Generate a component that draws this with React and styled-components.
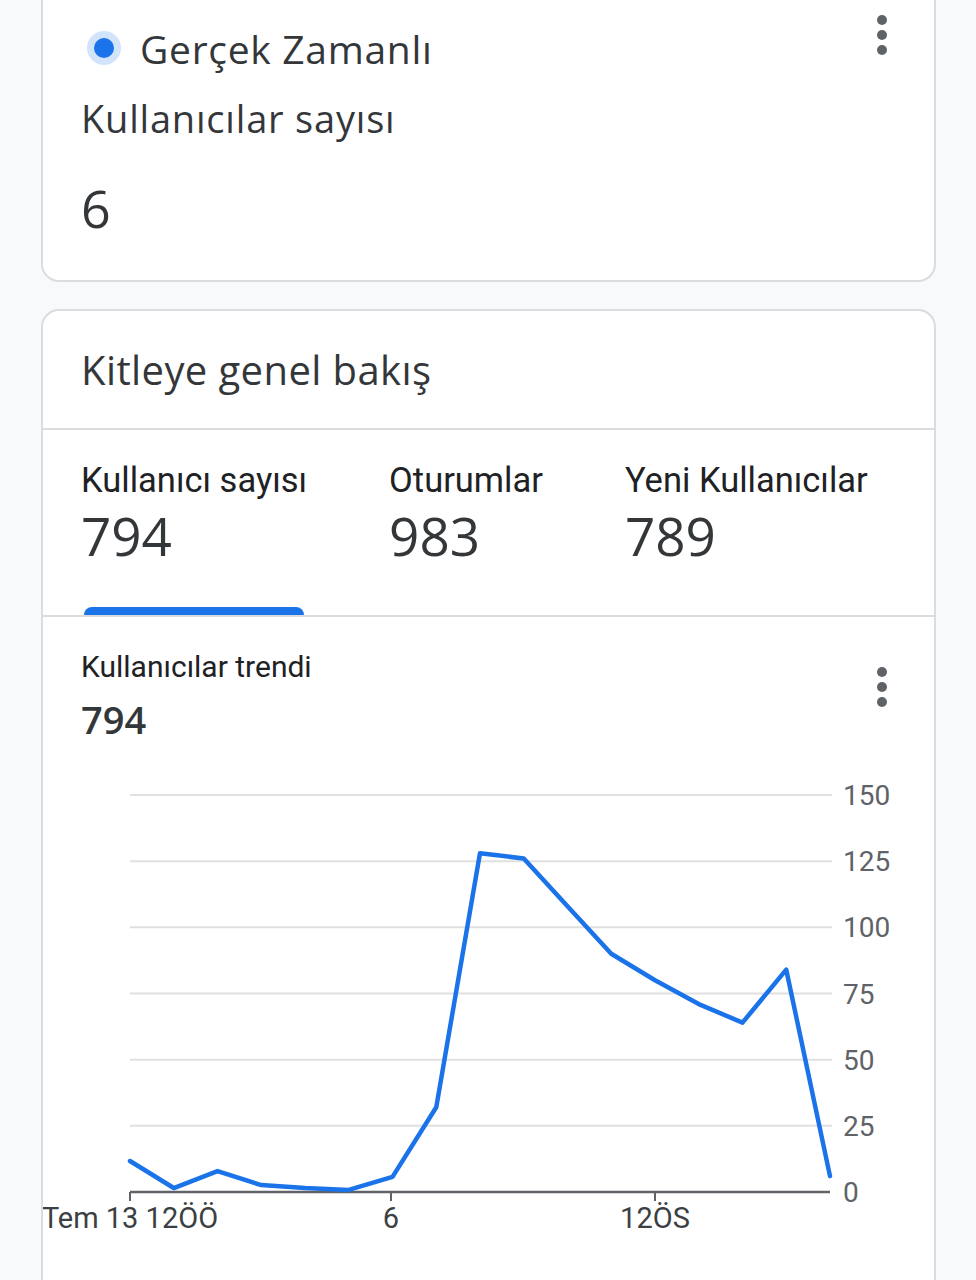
import React from 'react';
import styled, { createGlobalStyle } from 'styled-components';

const GlobalStyle = createGlobalStyle`
  body {
    margin: 0;
    background-color: #f8f9fa;
    font-family: Roboto, "Liberation Sans", sans-serif;
    color: #34373a;
  }
`;

const Page = styled.div`
  display: flex;
  flex-direction: column;
  gap: 27px;
  padding: 0 40px 0 41px;
`;

const Card = styled.div`
  background-color: white;
  border: 2px solid #dadce0;
  border-radius: 18px;
  ${({ cut }) => cut && `
    border-top: none;
    border-top-left-radius: 0;
    border-top-right-radius: 0;
  `}
`;

const RealtimeBody = styled.div`
  display: flex;
  flex-direction: column;
  padding: 0 0 42px 38px;
`;

const HeaderRow = styled.div`
  display: flex;
  align-items: center;
  height: 96px;
`;

const LiveDot = styled.span`
  width: 34px;
  height: 34px;
  border-radius: 50%;
  background-color: #d2e3fc;
  display: flex;
  align-items: center;
  justify-content: center;
  margin-left: 6px;
  margin-right: 19px;
  &::after {
    content: '';
    width: 20px;
    height: 20px;
    border-radius: 50%;
    background-color: #1a73e8;
  }
`;

const LiveTitle = styled.span`
  font-family: "Open Sans", sans-serif;
  font-size: 39px;
  letter-spacing: 0.7px;
  flex: 1;
`;

const MenuButton = styled.button`
  border: none;
  background: none;
  padding: 0;
  margin-right: 47px;
  align-self: flex-start;
  margin-top: ${({ top }) => top}px;
  display: flex;
  cursor: pointer;
`;

const MetricLabel = styled.div`
  font-family: "Open Sans", sans-serif;
  font-size: 38px;
  letter-spacing: 0.8px;
  line-height: 44px;
`;

const BigValue = styled.div`
  font-family: "Open Sans", sans-serif;
  font-size: 52px;
  line-height: 60px;
  margin-top: 38px;
`;

const CardTitle = styled.div`
  height: 117px;
  display: flex;
  align-items: center;
  padding-left: 38px;
  font-family: "Open Sans", sans-serif;
  font-size: 40px;
  letter-spacing: 0.4px;
  border-bottom: 2px solid #dadce0;
`;

const Tabs = styled.div`
  display: flex;
  gap: 82px;
  padding-left: 38px;
  border-bottom: 2px solid #dadce0;
`;

const Tab = styled.div`
  display: flex;
  flex-direction: column;
  padding-top: 30px;
`;

const TabLabel = styled.div`
  font-size: 34.5px;
  line-height: 40px;
  color: #202124;
`;

const TabValue = styled.div`
  font-family: "Open Sans", sans-serif;
  font-size: 53px;
  line-height: 60px;
  margin-top: 6px;
`;

const TabIndicator = styled.div`
  height: 8px;
  margin: 41px 0 0 3px;
  width: calc(100% - 6px);
  border-radius: 8px 8px 0 0;
  background-color: ${({ active }) => (active ? '#1a73e8' : 'transparent')};
`;

const ChartHeader = styled.div`
  display: flex;
  align-items: flex-start;
  padding: 32px 0 0 38px;
`;

const ChartTitleBlock = styled.div`
  flex: 1;
  display: flex;
  flex-direction: column;
`;

const ChartTitle = styled.div`
  font-size: 30px;
  line-height: 36px;
  color: #202124;
`;

const ChartValue = styled.div`
  font-family: "Open Sans", sans-serif;
  font-weight: 600;
  font-size: 38px;
  line-height: 44px;
  margin-top: 12px;
`;

const ChartSvg = styled.svg`
  display: block;
  margin-top: 19px;
  font-family: Roboto, sans-serif;
`;

const Kebab = () => (
  <svg width="10" height="40" viewBox="0 0 10 40">
    <circle cx="5" cy="5" r="5" fill="#5f6368" />
    <circle cx="5" cy="20" r="5" fill="#5f6368" />
    <circle cx="5" cy="35" r="5" fill="#5f6368" />
  </svg>
);

const values = [11.7, 1.5, 7.9, 2.6, 1.5, 0.8, 5.7, 32, 128, 126, 108, 90, 80, 71, 64, 84, 6];
const ticks = [150, 125, 100, 75, 50, 25, 0];
const xLabels = [
  { x: 87, text: 'Tem 13 12ÖÖ' },
  { x: 348, text: '6' },
  { x: 612, text: '12ÖS' },
];

const X0 = 87;
const X1 = 789;
const BASE = 432;
const PER_UNIT = 397 / 150;

function TrendChart() {
  const step = 700 / (values.length - 1);
  const points = values
    .map((v, i) => `${X0 + i * step},${BASE - v * PER_UNIT}`)
    .join(' ');
  return (
    <ChartSvg width="891" height="540" viewBox="0 0 891 540">
      {ticks.map((t) => {
        const y = BASE - t * PER_UNIT;
        return (
          <g key={t}>
            {t !== 0 && (
              <line x1={X0} x2={X1} y1={y} y2={y} stroke="#e0e0e0" strokeWidth="2" />
            )}
            <text x="800" y={y + 10} fontSize="28" fill="#5f6368">{t}</text>
          </g>
        );
      })}
      <line x1={X0} x2={787} y1={BASE} y2={BASE} stroke="#5f6368" strokeWidth="2.5" />
      {xLabels.map((l) => (
        <g key={l.text}>
          <line x1={l.x} x2={l.x} y1={BASE} y2={BASE + 9} stroke="#5f6368" strokeWidth="2" />
          <text x={l.x} y="468" fontSize="29" fill="#3c4043" textAnchor="middle">{l.text}</text>
        </g>
      ))}
      <polyline
        points={points}
        fill="none"
        stroke="#1a73e8"
        strokeWidth="4.5"
        strokeLinejoin="round"
        strokeLinecap="round"
      />
    </ChartSvg>
  );
}

const tabs = [
  { label: 'Kullanıcı sayısı', value: '794', active: true },
  { label: 'Oturumlar', value: '983' },
  { label: 'Yeni Kullanıcılar', value: '789' },
];

export default function App() {
  return (
    <>
      <GlobalStyle />
      <Page>
        <Card cut>
          <RealtimeBody>
            <HeaderRow>
              <LiveDot />
              <LiveTitle>Gerçek Zamanlı</LiveTitle>
              <MenuButton top={15}><Kebab /></MenuButton>
            </HeaderRow>
            <MetricLabel>Kullanıcılar sayısı</MetricLabel>
            <BigValue>6</BigValue>
          </RealtimeBody>
        </Card>
        <Card>
          <CardTitle>Kitleye genel bakış</CardTitle>
          <Tabs>
            {tabs.map((t) => (
              <Tab key={t.label}>
                <TabLabel>{t.label}</TabLabel>
                <TabValue>{t.value}</TabValue>
                <TabIndicator active={t.active} />
              </Tab>
            ))}
          </Tabs>
          <ChartHeader>
            <ChartTitleBlock>
              <ChartTitle>Kullanıcılar trendi</ChartTitle>
              <ChartValue>794</ChartValue>
            </ChartTitleBlock>
            <MenuButton top={18}><Kebab /></MenuButton>
          </ChartHeader>
          <TrendChart />
        </Card>
      </Page>
    </>
  );
}
